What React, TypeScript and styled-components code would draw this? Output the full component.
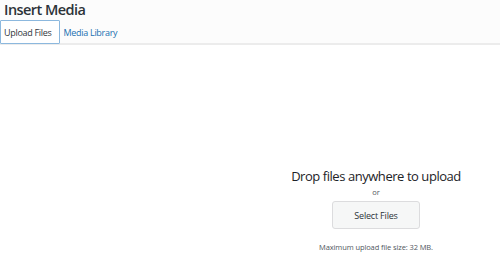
import styled, { createGlobalStyle } from 'styled-components';

const GlobalStyle = createGlobalStyle`
  html, body {
    margin: 0;
    padding: 0;
    background: #fff;
  }
  body {
    font-family: "Open Sans", "Noto Sans", sans-serif;
    color: #1d2327;
  }
`;

export default function App() {
  return (
    <>
      <GlobalStyle />
      <Frame>
        <Header>
          <Title>Insert Media</Title>
          <Tabs>
            <Tab $active>Upload Files</Tab>
            <Tab>Media Library</Tab>
          </Tabs>
        </Header>
        <DropArea>
          <Uploader>
            <DropText>Drop files anywhere to upload</DropText>
            <OrText>or</OrText>
            <SelectButton>Select Files</SelectButton>
            <MaxSize>Maximum upload file size: 32 MB.</MaxSize>
          </Uploader>
        </DropArea>
      </Frame>
    </>
  );
}

const Frame = styled.div`
  width: 500px;
  height: 278px;
  overflow: hidden;
  display: flex;
  flex-direction: column;
`;

const Header = styled.div`
  background: #fcfcfc;
  border-bottom: 2px solid #ececec;
  display: flex;
  flex-direction: column;
`;

const Title = styled.h1`
  margin: 0 0 1px;
  padding: 0 4px;
  font-size: 14.5px;
  font-weight: 600;
  line-height: 19px;
  color: #2c3338;
  letter-spacing: -0.55px;
`;

const Tabs = styled.div`
  display: flex;
  margin-bottom: -1px;
`;

const Tab = styled.div<{ $active?: boolean }>`
  height: 24px;
  box-sizing: border-box;
  padding: 1px ${({ $active }) => ($active ? '7px' : '4px')} 0 3px;
  display: flex;
  align-items: center;
  font-size: 9px;
  letter-spacing: -0.3px;
  color: ${({ $active }) => ($active ? '#32373c' : '#2271b1')};
  background: ${({ $active }) => ($active ? '#fff' : 'transparent')};
  border: 1px solid ${({ $active }) => ($active ? '#8cb8de' : 'transparent')};
  border-radius: 1px;
`;

const DropArea = styled.div`
  flex: 1;
  display: flex;
  padding-left: 252px;
`;

const Uploader = styled.div`
  width: 248px;
  display: flex;
  flex-direction: column;
  align-items: center;
  padding-top: 123px;
`;

const DropText = styled.div`
  font-size: 13px;
  line-height: 17px;
  letter-spacing: -0.45px;
  color: #1d2327;
`;

const OrText = styled.div`
  font-size: 7.5px;
  line-height: 12px;
  margin-top: 1px;
  color: #50575e;
`;

const SelectButton = styled.button`
  margin-top: 3px;
  width: 88px;
  height: 28px;
  box-sizing: border-box;
  font-family: inherit;
  font-size: 9px;
  letter-spacing: -0.2px;
  color: #2c3338;
  background: #f6f7f7;
  border: 1px solid #dcdcde;
  border-radius: 3px;
  padding: 0;
`;

const MaxSize = styled.div`
  margin-top: 12px;
  font-size: 7.5px;
  line-height: 12px;
  letter-spacing: -0.1px;
  color: #50575e;
`;
